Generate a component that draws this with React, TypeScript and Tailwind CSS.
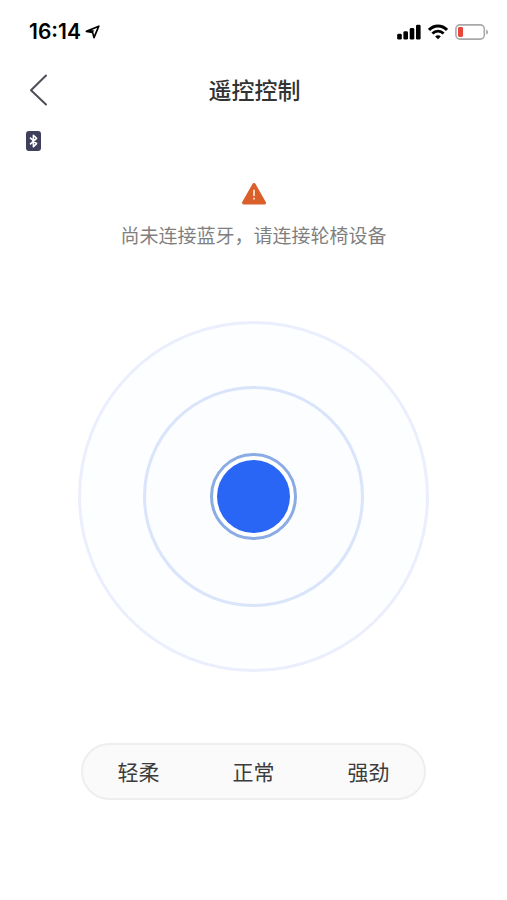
import React from "react";

const modes = ["轻柔", "正常", "强劲"];

function StatusBar() {
  return (
    <div className="flex h-16 items-center justify-between pl-[29px] pr-[18px] text-black">
      <div className="flex items-center gap-1">
        <span className="font-['Inter',sans-serif] text-[21px] font-semibold leading-6">16:14</span>
        <svg className="h-4 w-4" viewBox="0 0 16 16" fill="none" aria-hidden="true">
          <path d="M1.4 7.4 13.8 2.2 9 13.6 7.6 8.4Z" stroke="currentColor" strokeWidth="1.7" strokeLinejoin="round" />
          <path d="M1.4 7.4 7.6 8.4 9.4 6.4 5 6Z" fill="currentColor" />
        </svg>
      </div>
      <div className="flex items-center gap-[7px]">
        <svg className="h-4 w-6" viewBox="0 0 24 16" fill="currentColor" aria-hidden="true">
          <rect x="0.2" y="9.8" width="4.6" height="5.8" rx="1.4" />
          <rect x="6.4" y="7.2" width="4.6" height="8.4" rx="1.4" />
          <rect x="12.7" y="4" width="4.6" height="11.6" rx="1.4" />
          <rect x="19" y="0.7" width="4.6" height="14.9" rx="1.4" />
        </svg>
        <svg className="h-4 w-5" viewBox="0 0 20 16" fill="none" stroke="currentColor" aria-hidden="true">
          <path d="M1 5.9C6 .6 14 .6 19 5.9" strokeWidth="3" />
          <path d="M4.4 9.5C7.6 6.2 12.4 6.2 15.6 9.5" strokeWidth="2.8" />
          <path d="M7.2 12.4C8.8 10.8 11.2 10.8 12.8 12.4L10 15.3Z" fill="currentColor" stroke="none" />
        </svg>
        <svg className="h-4 w-[34px]" viewBox="0 0 34 16" fill="none" aria-hidden="true">
          <rect x="0.9" y="0.9" width="28.4" height="14.2" rx="4" stroke="#a9a9a9" strokeWidth="1.6" />
          <rect x="3" y="3" width="5" height="10" rx="1.4" fill="#e8463a" />
          <path d="M31.2 5.4C33.6 6.2 33.6 9.8 31.2 10.6Z" fill="#a9a9a9" />
        </svg>
      </div>
    </div>
  );
}

function Header() {
  return (
    <header className="grid h-[52px] grid-cols-[64px_1fr_62px] items-center">
      <button type="button" aria-label="返回" className="flex h-full items-center pl-[29px]">
        <svg className="h-8 w-[18px]" viewBox="0 0 18 32" fill="none" aria-hidden="true">
          <path d="M17 1.5 2 16.2 17 30.5" stroke="#4e4e58" strokeWidth="2" strokeLinecap="round" strokeLinejoin="round" />
        </svg>
      </button>
      <h1 className="pb-[2px] text-center text-[23px] font-medium leading-8 text-[#333333]">遥控控制</h1>
    </header>
  );
}

function Joystick() {
  return (
    <div className="mt-[72px] flex aspect-square w-[351px] max-w-full items-center justify-center rounded-full border-3 border-[#ebeffd] bg-[#fcfeff]">
      <div className="flex h-[221px] w-[221px] items-center justify-center rounded-full border-3 border-[#dae5fb] bg-[#fbfdff]">
        <div className="flex h-[87px] w-[87px] items-center justify-center rounded-full border-3 border-[#8babe4] bg-white">
          <button type="button" aria-label="方向摇杆" className="h-[73px] w-[73px] rounded-full bg-[#2a66f6]" />
        </div>
      </div>
    </div>
  );
}

export default function App() {
  return (
    <div className="min-h-screen bg-white font-['Noto_Sans_CJK_SC',sans-serif]">
      <StatusBar />
      <Header />
      <main className="flex flex-col items-center">
        <div className="flex w-full pl-[26px] pt-[15px]">
          <svg className="h-5 w-[15px]" viewBox="0 0 15 20" fill="none" role="img" aria-label="蓝牙">
            <rect width="15" height="20" rx="3" fill="#3f3f5b" />
            <path d="M4 6.6 10.6 12.6 7.4 15.8V4.2L10.6 7.3 4 13.3" stroke="#fff" strokeWidth="1.6" strokeLinejoin="round" />
          </svg>
        </div>
        <svg className="mt-[31px] h-6 w-[26px]" viewBox="0 0 26 24" fill="none" aria-hidden="true">
          <path d="M13 2.8 23.2 20.8H2.8Z" fill="#da5f2a" stroke="#da5f2a" strokeWidth="3.6" strokeLinejoin="round" />
          <path d="M13 7.8V14" stroke="#fbe3cf" strokeWidth="1.8" />
          <path d="M13 15.8V17.6" stroke="#fbe3cf" strokeWidth="1.8" />
        </svg>
        <p className="mt-[15px] text-[19px] leading-7 text-[#7f7f7f]">尚未连接蓝牙，请连接轮椅设备</p>
        <Joystick />
        <div className="mt-[71px] grid h-[57px] w-[345px] max-w-full grid-cols-3 gap-1 rounded-full border-2 border-[#eeeeee] bg-[#fafafa]">
          {modes.map((mode) => (
            <button key={mode} type="button" className="pb-[2px] text-[21px] leading-8 text-[#3c3c3c]">
              {mode}
            </button>
          ))}
        </div>
      </main>
    </div>
  );
}
